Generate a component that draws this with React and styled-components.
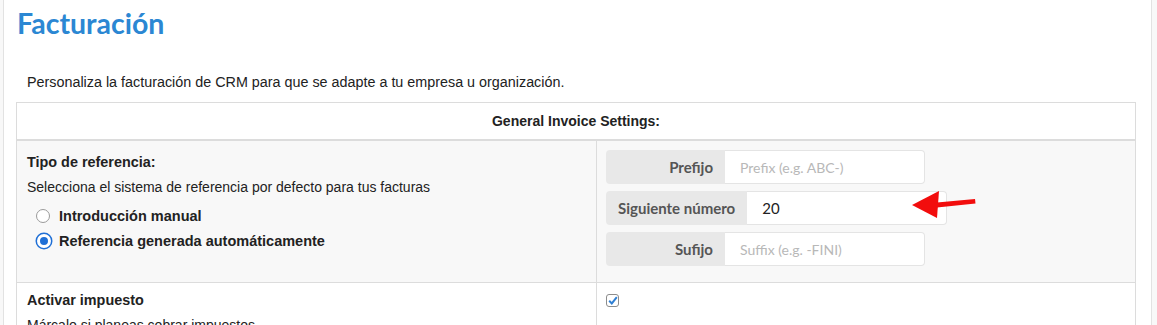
import React from "react";
import styled, { createGlobalStyle } from "styled-components";

const GlobalStyle = createGlobalStyle`
  html, body {
    margin: 0;
    padding: 0;
    background: #f8f8f8;
  }
  body {
    font-family: "Liberation Sans", Arial, sans-serif;
    color: #222;
  }
`;

export default function App() {
  return (
    <>
      <GlobalStyle />
      <Panel>
        <Title>Facturación</Title>
        <Intro>
          Personaliza la facturación de CRM para que se adapte a tu empresa u
          organización.
        </Intro>
        <Settings>
          <thead>
            <tr>
              <HeadCell colSpan={2}>General Invoice Settings:</HeadCell>
            </tr>
          </thead>
          <tbody>
            <Row $shaded>
              <LeftCell $top={12}>
                <FieldName>Tipo de referencia:</FieldName>
                <Help>Selecciona el sistema de referencia por defecto para tus facturas</Help>
                <RadioList>
                  <RadioLabel>
                    <Radio />
                    Introducción manual
                  </RadioLabel>
                  <RadioLabel>
                    <Radio $checked />
                    Referencia generada automáticamente
                  </RadioLabel>
                </RadioList>
              </LeftCell>
              <RightCell>
                <Groups>
                  <InputGroup>
                    <Addon>Prefijo</Addon>
                    <Field $placeholder>Prefix (e.g. ABC-)</Field>
                  </InputGroup>
                  <ArrowWrap>
                    <InputGroup>
                      <Addon>Siguiente número</Addon>
                      <Field>20</Field>
                    </InputGroup>
                    <Arrow width="70" height="32" viewBox="0 0 70 32">
                      <polygon points="4,14 31,0 29,27" fill="#f20d0d" />
                      <polygon points="29,11.5 67,8 67.5,12.5 29,16.5" fill="#f20d0d" />
                    </Arrow>
                  </ArrowWrap>
                  <InputGroup>
                    <Addon>Sufijo</Addon>
                    <Field $placeholder>Suffix (e.g. -FINI)</Field>
                  </InputGroup>
                </Groups>
              </RightCell>
            </Row>
            <Row>
              <LeftCell $top={8}>
                <FieldName>Activar impuesto</FieldName>
                <Help>Márcalo si planeas cobrar impuestos</Help>
              </LeftCell>
              <RightCell>
                <CheckBox>
                  <svg width="10" height="9" viewBox="0 0 10 9">
                    <path d="M1.2 4.8 L3.8 7.4 L8.8 1.2" fill="none" stroke="#2f7fd3" strokeWidth="2" />
                  </svg>
                </CheckBox>
              </RightCell>
            </Row>
          </tbody>
        </Settings>
      </Panel>
    </>
  );
}

const Panel = styled.div`
  margin: 0 5px 0 3px;
  min-height: 325px;
  box-sizing: border-box;
  background: #fff;
  border-left: 1px solid #e2e2e2;
  border-right: 1px solid #e2e2e2;
  padding: 0 15px 0 12px;
`;

const Title = styled.h1`
  margin: 0;
  padding-top: 6px;
  padding-left: 1px;
  font-family: Lato, "Liberation Sans", sans-serif;
  font-weight: 700;
  font-size: 28.5px;
  line-height: 34px;
  color: #2b87d3;
`;

const Intro = styled.p`
  margin: 33px 0 0;
  padding-left: 11px;
  font-size: 14.35px;
  line-height: 18px;
  color: #222;
`;

const Settings = styled.table`
  margin-top: 11px;
  width: 100%;
  border-collapse: collapse;
  border: 1px solid #dcdcdc;
  font-size: 14px;
`;

const HeadCell = styled.th`
  height: 36px;
  padding: 0;
  text-align: center;
  font-weight: 700;
  font-size: 14px;
  color: #222;
  border-bottom: 2px solid #dcdcdc;
`;

const Row = styled.tr`
  background: ${({ $shaded }) => ($shaded ? "#f8f8f8" : "#fff")};
  border-bottom: 1px solid #dcdcdc;
`;

const LeftCell = styled.td`
  width: 559px;
  vertical-align: top;
  padding: ${({ $top }) => $top}px 10px 0 10px;
  border-right: 1px solid #dcdcdc;
`;

const RightCell = styled.td`
  vertical-align: top;
  padding: 9px 10px 15px 9px;
`;

const FieldName = styled.div`
  font-weight: 700;
  font-size: 14.4px;
  line-height: 18px;
  color: #222;
`;

const Help = styled.div`
  margin-top: 7px;
  line-height: 18px;
  color: #222;
`;

const RadioList = styled.div`
  display: flex;
  flex-direction: column;
  gap: 7px;
  margin-top: 11px;
  padding-left: 9px;
  padding-bottom: 32px;
`;

const RadioLabel = styled.label`
  display: flex;
  align-items: center;
  gap: 9px;
  font-weight: 700;
  font-size: 14.5px;
  line-height: 18px;
  color: #222;
`;

const Radio = styled.span`
  box-sizing: border-box;
  width: 14px;
  height: 14px;
  border-radius: 50%;
  background: ${({ $checked }) => ($checked ? "#1f6fd6" : "#fff")};
  border: ${({ $checked }) =>
    $checked ? "3px solid #fff" : "1px solid #9a9a9a"};
  box-shadow: ${({ $checked }) => ($checked ? "0 0 0 1.5px #1f6fd6" : "none")};
  margin-left: ${({ $checked }) => ($checked ? "1px" : "0")};
  margin-right: ${({ $checked }) => ($checked ? "-1px" : "0")};
`;

const Groups = styled.div`
  display: flex;
  flex-direction: column;
  gap: 7px;
`;

const ArrowWrap = styled.div`
  position: relative;
  align-self: flex-start;
`;

const Arrow = styled.svg`
  position: absolute;
  left: 302px;
  top: 0;
`;

const InputGroup = styled.div`
  display: flex;
  align-self: flex-start;
  height: 34px;
  font-family: Lato, "Liberation Sans", sans-serif;
`;

const Addon = styled.div`
  box-sizing: border-box;
  min-width: 119px;
  padding: 0 12px;
  display: flex;
  align-items: center;
  justify-content: flex-end;
  background: #e8e8e8;
  border-radius: 4px 0 0 4px;
  font-weight: 700;
  font-size: 15px;
  color: #555;
  white-space: nowrap;
`;

const Field = styled.div`
  box-sizing: border-box;
  width: 200px;
  padding: 0 15px;
  display: flex;
  align-items: center;
  background: #fff;
  border: 1px solid #e4e4e4;
  border-left: none;
  border-radius: 0 4px 4px 0;
  font-size: ${({ $placeholder }) => ($placeholder ? "14px" : "15px")};
  color: ${({ $placeholder }) => ($placeholder ? "#b8b8b8" : "#222")};
`;

const CheckBox = styled.span`
  box-sizing: border-box;
  margin-top: 2px;
  display: flex;
  align-items: center;
  justify-content: center;
  width: 13px;
  height: 13px;
  border: 1px solid #8c8c8c;
  border-radius: 3px;
  background: #fff;
`;
